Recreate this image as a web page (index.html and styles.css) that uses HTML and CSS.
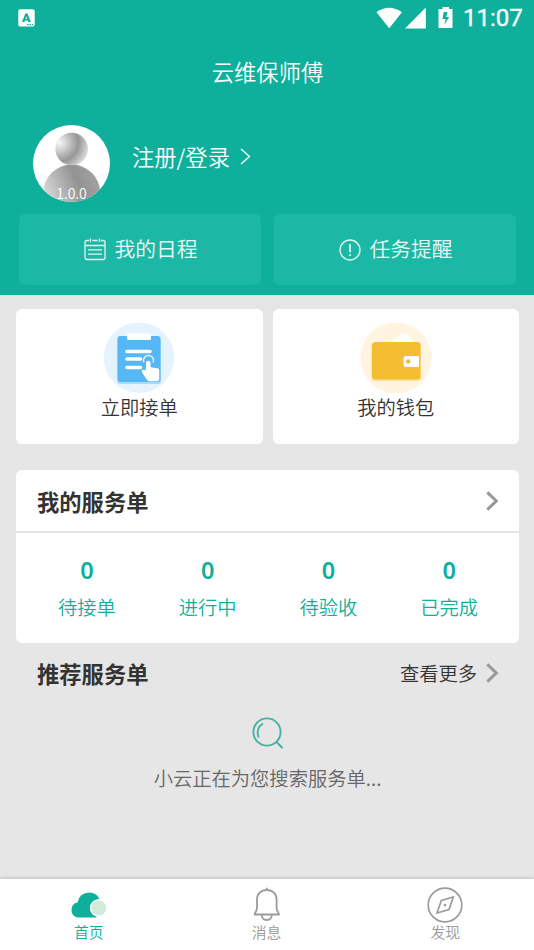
FILE: index.html
```html
<!DOCTYPE html>
<html lang="zh-CN">
<head>
<meta charset="utf-8">
<title>云维保师傅</title>
<link rel="stylesheet" href="styles.css">
</head>
<body>
<div class="app">
  <header class="header">
    <div class="status">
      <svg class="status-app" width="17" height="18" viewBox="0 0 17 18"><rect x=".3" y=".2" width="16.4" height="17.4" rx="1.8" fill="#fff"/><path fill-rule="evenodd" fill="#0eb09b" d="M7.300 4.500h2.200l3.300 8.500h-2.500l-.5-1.500H6.900L6.400 13H4zM8.400 7.300 7.500 9.800h1.800z"/><path d="M9 15.6h1.5m1 0H13m1 0h1.2" stroke="#0eb09b" stroke-width="1.2"/></svg>
      <svg class="status-icons" width="78" height="24" viewBox="0 0 78 24" fill="#fff"><path d="M.5 6.300Q13 -3 26 6.300L13.200 22.300z"/><path d="M49.800 1.500v21H29z"/><path fill-rule="evenodd" d="M66.500 1h6.500v2h3.500v19h-14V3h4zM71.500 6h-3.800L66.500 13h3.200l-1.500 6 5-8h-3z"/></svg>
      <span class="clock">11:07</span>
    </div>
    <h1 class="title">云维保师傅</h1>
    <div class="profile">
      <div class="avatar">
        <svg width="77" height="77" viewBox="0 0 77 77">
          <defs>
            <radialGradient id="head" cx=".12" cy=".3" r=".9"><stop offset="0" stop-color="#f8f8f8"/><stop offset=".65" stop-color="#969696"/><stop offset="1" stop-color="#d8d8d8"/></radialGradient>
            <linearGradient id="body" x1="0" y1=".7" x2="1" y2=".3"><stop offset="0" stop-color="#e4e4e4"/><stop offset=".65" stop-color="#929292"/><stop offset="1" stop-color="#a4a4a4"/></linearGradient>
            <clipPath id="disc"><circle cx="38.500" cy="38.500" r="38.500"/></clipPath>
          </defs>
          <circle cx="38.500" cy="38.500" r="38.500" fill="#fff"/>
          <g clip-path="url(#disc)"><circle cx="38.700" cy="68" r="28.500" fill="url(#body)"/><circle cx="38.700" cy="24" r="16.300" fill="url(#head)"/></g>
        </svg>
        <span class="version">1.0.0</span>
      </div>
      <span class="login">注册/登录</span>
      <svg class="login-arrow" width="11" height="17" viewBox="0 0 11 17" fill="none" stroke="#fff" stroke-width="1.300"><path d="m1 1 8.500 7.500L1 16"/></svg>
    </div>
    <div class="shortcuts">
      <div class="shortcut">
        <svg width="22" height="23" viewBox="0 0 22 23" fill="none" stroke="#e4f6f3" stroke-width="1.300"><path d="M5 2.500H3Q1 2.500 1 4.500v15Q1 21.500 3 21.500h16q2 0 2-2v-15q0-2-2-2h-2M8.500 2.500h5M1 7.500h20M6.500.5v3.500M15.500.5v3.500M4 11.800h14M4 16.200h14"/></svg>
        <span>我的日程</span>
      </div>
      <div class="shortcut">
        <svg width="22" height="22" viewBox="0 0 22 22" fill="none" stroke="#e4f6f3" stroke-width="1.400"><circle cx="11" cy="11" r="10"/><path d="M11 5v8.300M11 15.200v1.800" stroke-width="1.700"/></svg>
        <span>任务提醒</span>
      </div>
    </div>
  </header>
  <main class="content">
    <div class="cards">
      <section class="card">
        <svg width="72" height="72" viewBox="0 0 72 72">
          <circle cx="36" cy="35.700" r="35.300" fill="#e4f3fe"/>
          <rect x="14.500" y="15.500" width="43.500" height="46.500" rx="3" fill="#a9dafb"/>
          <rect x="14.500" y="14" width="43" height="46" rx="3" fill="#55b7f5"/>
          <rect x="24" y="11.500" width="24" height="6.500" rx="1.500" fill="#fff"/>
          <path d="M24 29.500h23M24 37h13.500M24 45.500h13.500" stroke="#fff" stroke-width="3.600" stroke-linecap="round"/>
          <path d="M41 40.500a5 5 0 1 1 9 0" fill="none" stroke="#fff" stroke-width="1.200"/>
          <path d="M43 48V41q0-2.200 2.300-2.200T47.600 41v4.300l7 1q1.700.4 1.700 2.200v8.200q0 2.600-2.300 2.600h-8.500Q43.700 58 42 55l-3-4.700q-1-2.500 1-2.600z" fill="#fff"/>
        </svg>
        <span>立即接单</span>
      </section>
      <section class="card">
        <svg width="72" height="72" viewBox="0 0 72 72">
          <circle cx="36" cy="36" r="35.600" fill="#fef4df"/>
          <path d="M27 21.500 41 12.500q7-3 10 3l3 6z" fill="#fff"/>
          <rect x="11.500" y="21" width="49.500" height="38" rx="4" fill="#fbe0a0"/>
          <rect x="12" y="20" width="48.500" height="37.500" rx="3.500" fill="#f5be30"/>
          <path d="M46 34h13v11H46q-2.500 0-2.500-2.500v-6Q43.500 34 46 34z" fill="#fff"/>
          <circle cx="48.300" cy="39.500" r="2.200" fill="#f5be30"/>
        </svg>
        <span>我的钱包</span>
      </section>
    </div>
    <section class="orders">
      <div class="row orders-head">
        <h2>我的服务单</h2>
        <svg class="chevron" width="13" height="20" viewBox="0 0 13 20"><path d="m1.300 1.300 9 8.700-9 8.700"/></svg>
      </div>
      <div class="stats">
        <div class="stat"><b>0</b><span>待接单</span></div>
        <div class="stat"><b>0</b><span>进行中</span></div>
        <div class="stat"><b>0</b><span>待验收</span></div>
        <div class="stat"><b>0</b><span>已完成</span></div>
      </div>
    </section>
    <div class="row recommend">
      <h2>推荐服务单</h2>
      <span class="more">查看更多</span>
      <svg class="chevron" width="13" height="20" viewBox="0 0 13 20"><path d="m1.300 1.300 9 8.700-9 8.700"/></svg>
    </div>
    <div class="searching">
      <svg width="32" height="32" viewBox="0 0 32 32" fill="none" stroke="#48b09f" stroke-width="1.900"><circle cx="15" cy="15" r="13.600"/><path d="m24.500 25 6 6" stroke-width="2"/><path d="M11 6.500Q3.500 11 6.500 20.500"/></svg>
      <p>小云正在为您搜索服务单...</p>
    </div>
  </main>
  <nav class="tabs">
    <div class="tab active">
      <svg width="36" height="36" viewBox="0 0 36 36"><path d="M7 30.500Q.5 29.500.5 23q0-6.500 6-7.500Q8.500 5.500 18.500 5.500q7 0 10 6.500l-3 18.500z" fill="#0eb09b"/><circle cx="27.800" cy="21" r="9" fill="#fff"/><circle cx="27.800" cy="21" r="7.500" fill="#cfecda"/></svg>
      <span>首页</span>
    </div>
    <div class="tab">
      <svg width="36" height="36" viewBox="0 0 36 36" fill="none" stroke="#9b9b9b" stroke-width="1.800"><path d="M17.800 3C12 3 8 7 8 12.500V21c0 3-2.300 4.500-2.300 6.500h24.200c0-2-2.300-3.500-2.300-6.500v-8.500C27.600 7 23.600 3 17.800 3zM17.800.8V3M12.800 27.500c0 3.500 2 5.500 5 5.500s5-2 5-5.500"/></svg>
      <span>消息</span>
    </div>
    <div class="tab">
      <svg width="36" height="36" viewBox="0 0 36 36" fill="none" stroke="#9b9b9b" stroke-width="1.700"><circle cx="18" cy="18" r="16.800"/><path d="m26.300 10-12 3.500-4.300 12.500 12-3.500z"/><circle cx="18" cy="18" r="1.300" fill="#9b9b9b" stroke="none"/></svg>
      <span>发现</span>
    </div>
  </nav>
</div>
</body>
</html>
```
FILE: styles.css
```css
* { box-sizing: border-box; margin: 0; padding: 0; }
body { font-family: "Noto Sans CJK SC", sans-serif; font-weight: 350; color: #333; }
svg { display: block; flex: none; }
.app { width: 534px; height: 950px; display: flex; flex-direction: column; background: #e6e6e6; overflow: hidden; }

.header { height: 295px; flex: none; background: #0eb09b; color: #fff; }
.status { height: 36px; display: flex; align-items: center; padding: 0 12px 0 18px; }
.status-icons { margin-left: auto; }
.clock { width: 59px; margin-left: 9px; font: 400 24px/36px Roboto, sans-serif; -webkit-text-stroke: .35px #fff; white-space: nowrap; }
.title { height: 70px; padding-left: 1px; font-size: 22.3px; font-weight: 350; line-height: 70px; text-align: center; }
.profile { height: 96px; margin-top: 12px; padding: 7px 0 0 33px; display: flex; align-items: flex-start; }
.avatar { position: relative; width: 77px; height: 77px; }
.version { position: absolute; left: 0; right: 0; bottom: -1px; font-size: 14px; line-height: 20px; text-align: center; }
.login { margin: 14px 0 0 22px; font-size: 22.3px; line-height: 34px; }
.login-arrow { margin: 23px 0 0 10px; }
.shortcuts { display: flex; gap: 13px; padding: 0 18px 0 19px; }
.shortcut { flex: 1; height: 71px; padding-left: 2px; border-radius: 6px; background: #1bb8a5; color: #e9f8f6; display: flex; align-items: center; justify-content: center; gap: 8px; font-size: 20.800px; line-height: 30px; }
.shortcut span { margin-top: -4px; }

.content { flex: 1; padding: 14px 15px 0 16px; }
.cards { display: flex; gap: 10px; }
.card { flex: 1; height: 135px; padding-top: 13px; background: #fff; border-radius: 6px; display: flex; flex-direction: column; align-items: center; font-size: 19.300px; line-height: 26px; }
.orders { height: 173px; margin-top: 26px; background: #fff; border-radius: 6px; }
.row { display: flex; align-items: center; padding: 0 20px 0 21px; }
.row h2 { flex: 1; font-size: 22.300px; font-weight: 700; line-height: 32px; }
.orders-head { height: 63px; padding-top: 1px; border-bottom: 2px solid #e6e6e6; }
.chevron { fill: none; stroke: #999; stroke-width: 3; }
.stats { display: flex; padding: 22px 10px 0; color: #0eb09b; text-align: center; }
.stat { flex: 1; padding-left: 1px; }
.stat b { display: block; font: 600 23.500px/30px "Noto Sans", sans-serif; }
.stat span { display: block; margin-top: 8px; font-size: 19.300px; line-height: 28px; }
.recommend { height: 59px; }
.more { margin-right: 9px; font-size: 19.300px; }
.searching { display: flex; flex-direction: column; align-items: center; padding-top: 15px; color: #666; }
.searching p { margin-top: 14px; font-size: 19.300px; line-height: 30px; }

.tabs { height: 71px; flex: none; display: flex; background: #fff; box-shadow: 0 -1px 3px rgba(0, 0, 0, .16); }
.tab { flex: 1; display: flex; flex-direction: column; align-items: center; padding: 8px 0 0; color: #999; font-size: 14.800px; line-height: 18px; }
.tab:last-child { padding-left: 1px; }
.tab.active { color: #0eb09b; }
```
